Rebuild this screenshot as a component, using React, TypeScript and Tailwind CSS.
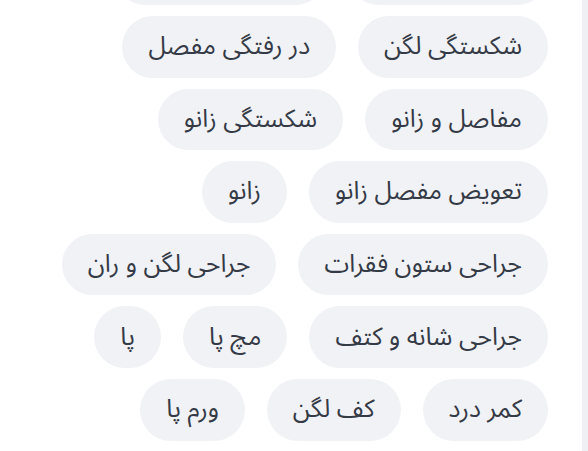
const ROWS: string[][] = [
  ["شکستگی لگن", "در رفتگی مفصل"],
  ["مفاصل و زانو", "شکستگی زانو"],
  ["تعویض مفصل زانو", "زانو"],
  ["جراحی ستون فقرات", "جراحی لگن و ران"],
  ["جراحی شانه و کتف", "مچ پا", "پا"],
  ["کمر درد", "کف لگن", "ورم پا"],
];

const Tag = ({ label }: { label: string }) => (
  <span className="flex h-[61.6px] items-center rounded-full bg-[#f1f2f6] px-[26px] text-[25px] leading-none text-[#343a46] whitespace-nowrap">
    {label}
  </span>
);

export default function App() {
  return (
    <div className="flex h-[451px] w-[588px] overflow-hidden bg-white font-['Noto_Sans_Arabic','Noto_Sans','DejaVu_Sans',sans-serif]">
      <div dir="rtl" className="flex-1 pr-[34px]">
        <div className="mt-[-56.6px] flex flex-col gap-y-[11px]">
          {/* row scrolled out of view above */}
          <div className="flex gap-x-[22px]">
            <span className="h-[61.6px] w-[200px] rounded-full bg-[#f1f2f6]" />
            <span className="h-[61.6px] w-[211px] rounded-full bg-[#f1f2f6]" />
          </div>
          {ROWS.map((row, i) => (
            <div key={i} className="flex gap-x-[22px]">
              {row.map((tag) => (
                <Tag key={tag} label={tag} />
              ))}
            </div>
          ))}
        </div>
      </div>
      <div className="w-[6px] bg-[#eff0f4]" />
    </div>
  );
}
